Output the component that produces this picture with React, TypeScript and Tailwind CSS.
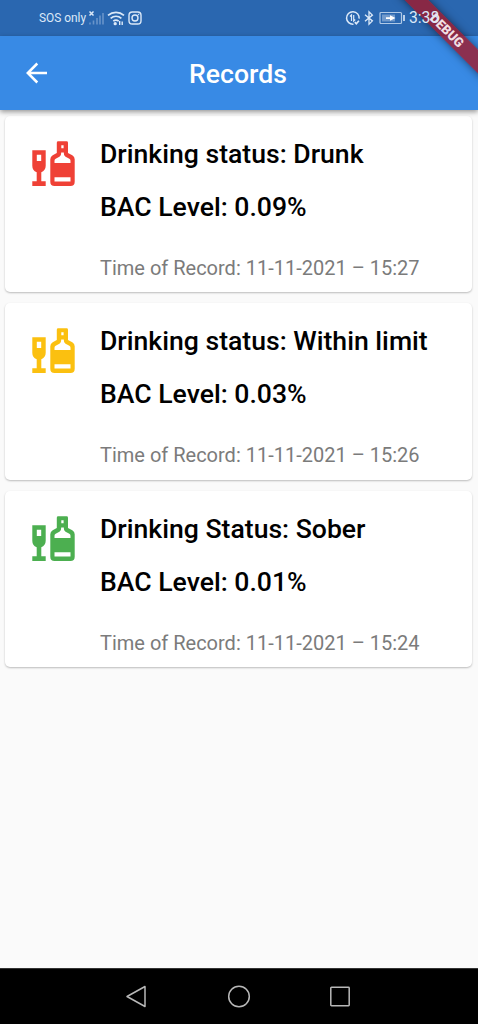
import React from "react";

type DrinkRecord = {
  status: string;
  level: string;
  time: string;
  color: string;
};

const records: DrinkRecord[] = [
  { status: "Drinking status: Drunk", level: "0.09%", time: "11-11-2021 – 15:27", color: "text-[#ef4136]" },
  { status: "Drinking status: Within limit", level: "0.03%", time: "11-11-2021 – 15:26", color: "text-[#fbc010]" },
  { status: "Drinking Status: Sober", level: "0.01%", time: "11-11-2021 – 15:24", color: "text-[#4caf50]" },
];

function LiquorIcon({ className }: { className: string }) {
  return (
    <svg viewBox="0 0 45 47" className={className} fill="currentColor" fillRule="evenodd">
      <path d="M1.300 10.300h13.400v15.500c0 3.200-1.700 5.400-4.400 6.400v9h4.400v4.800H1.300v-4.800H5.700v-9c-3-1-4.400-3.200-4.400-6.400zM5.800 14.700v6.300h4.400v-6.300z" />
      <path d="M27.200 1.300h8.400q1.400 0 1.400 1.400v10.200l4.300 2.400q2.400 1.300 2.400 4v22.400q0 4.300-4.300 4.300H23.600q-4.300 0-4.300-4.300V19.300q0-2.700 2.400-4l4.100-2.400V2.700q0-1.400 1.400-1.400zM30.300 5.300v2.900h2.300V5.300zM30.200 12.400c0 2.900-1 4.100-3.200 5.200l-2.300 1.200q-1.200.6-1.200 2v2.300h16v-2.300q0-1.400-1.200-2L36 17.600c-2.200-1.100-3.200-2.300-3.200-5.200zM23.500 37.300v4.200h16v-4.200z" />
    </svg>
  );
}

function StatusBar() {
  return (
    <div className="flex h-9 items-center justify-between bg-[#2a67b0] pl-[39px] text-[#dce9f8]">
      <div className="flex items-center">
        <span className="w-[48px] whitespace-nowrap text-[11.900px] leading-4">SOS only</span>
        <svg viewBox="0 0 17 16" className="h-4 w-[17px]" fill="none">
          <path d="M2.500 1.500l4 4m0-4l-4 4" stroke="currentColor" strokeWidth="1.500" />
          <path d="M3 14.500v-2M6.500 14.500v-4M10 14.500V8M13 14.500V5.500M16 14.500V3" stroke="currentColor" strokeWidth="1.600" opacity=".35" />
        </svg>
        <svg viewBox="0 0 18 16" className="ml-[3px] h-4 w-[18px]" fill="none" stroke="currentColor" strokeWidth="1.700">
          <path d="M1 5.300c4.700-4 11.300-4 16 0M3.600 8.300c3.200-2.700 7.600-2.700 10.800 0M6.300 11.200c1.600-1.400 3.800-1.400 5.400 0" />
          <circle cx="8.200" cy="13.700" r=".8" fill="currentColor" />
          <path d="M12.700 11v4M15.200 11.500v3.500" strokeWidth="1.400" />
        </svg>
        <svg viewBox="0 0 14 14" className="ml-[3px] h-[14px] w-[14px]" fill="none" stroke="currentColor" strokeWidth="1.400">
          <rect x="1" y="1" width="12" height="12" rx="3.300" />
          <circle cx="7" cy="7" r="3" />
          <circle cx="10.500" cy="3.500" r=".5" fill="currentColor" strokeWidth=".5" />
        </svg>
      </div>
      <div className="relative z-30 flex w-[133px] items-center">
        <svg viewBox="0 0 16 16" className="h-4 w-4" fill="none" stroke="currentColor" strokeWidth="1.500">
          <path d="M8.500 14.200a6.300 6.300 0 1 1 5.600-5.500" />
          <path d="M6.500 11V5L5 6.500M8.700 5v6l1.500-1.500" strokeWidth="1.200" />
          <path d="M9.800 12.200l1.500 1.500 2.600-3" strokeWidth="1.700" />
        </svg>
        <svg viewBox="0 0 10 16" className="ml-[3px] h-4 w-[10px]" fill="none" stroke="currentColor" strokeWidth="1.300">
          <path d="M1 4.700l7.400 6.200L5 14.300V1.700l3.400 3.400L1 11.300" />
        </svg>
        <svg viewBox="0 0 27 14" className="ml-[5px] h-[14px] w-[27px]" fill="none">
          <rect x="1" y="1.500" width="21.500" height="11" rx="1" stroke="currentColor" strokeWidth="1.200" opacity=".75" />
          <rect x="3" y="3.500" width="13" height="7" fill="currentColor" opacity=".4" />
          <path d="M7 6.300h4V4.200l5.500 2.900-5.500 2.700V8H7z" fill="white" />
          <path d="M25 4v6" stroke="currentColor" strokeWidth="1.600" />
        </svg>
        <span className="ml-[3px] text-[15.700px] leading-4">3:38</span>
      </div>
    </div>
  );
}

function RecordCard({ record }: { record: DrinkRecord }) {
  return (
    <article className="flex h-[176.500px] shrink-0 rounded-[5px] bg-white pl-[26px] pt-[24px] shadow-[0_1px_2px_rgba(0,0,0,0.25)]">
      <LiquorIcon className={"h-[47px] w-[45px] shrink-0 " + record.color} />
      <div className="-mt-px ml-[24px] whitespace-nowrap">
        <h2 className="text-[26.600px] font-medium leading-[30px] text-black">{record.status}</h2>
        <p className="mt-[23px] text-[26.600px] font-medium leading-[30px] text-black">BAC Level: {record.level}</p>
        <p className="mt-[34px] text-[20px] leading-6 text-[#7b7b7b]">Time of Record: {record.time}</p>
      </div>
    </article>
  );
}

export default function App() {
  return (
    <div className="relative flex h-[1024px] w-[478px] flex-col overflow-hidden bg-[#fafafa] font-['Roboto',sans-serif]">
      <StatusBar />
      <header className="relative z-10 flex h-[74px] shrink-0 items-center bg-[#388ae5] px-[25px] text-white shadow-[0_2px_5px_rgba(0,0,0,0.4)]">
        <button aria-label="Back" className="w-6">
          <svg viewBox="0 0 24 24" className="h-6 w-6" fill="none" stroke="currentColor" strokeWidth="2.500">
            <path d="M22 12H3M12.300 2.500L2.800 12l9.500 9.500" />
          </svg>
        </button>
        <h1 className="flex-1 pr-[26px] pt-[2px] text-center text-[26.600px] font-medium leading-8">Records</h1>
      </header>
      <main className="flex flex-1 flex-col gap-[11px] pl-[5px] pr-[6px] pt-[5.500px]">
        {records.map((record) => (
          <RecordCard key={record.time} record={record} />
        ))}
      </main>
      <nav className="flex h-[56px] shrink-0 items-center justify-between border-t border-[#333] bg-black pl-[125px] pr-[126px] text-[#b8b8b8]">
        <svg viewBox="0 0 24 24" className="h-6 w-6" fill="none" stroke="currentColor" strokeWidth="1.500" strokeLinejoin="round">
          <path d="M20 1.500v20L2 11.500z" />
        </svg>
        <svg viewBox="0 0 24 24" className="h-6 w-6" fill="none" stroke="currentColor" strokeWidth="1.500">
          <circle cx="12" cy="11.500" r="10.300" />
        </svg>
        <svg viewBox="0 0 24 24" className="h-6 w-6" fill="none" stroke="currentColor" strokeWidth="1.500">
          <rect x="2.800" y="2.300" width="18.400" height="18.400" rx=".7" />
        </svg>
      </nav>
      <div className="absolute left-[387px] top-[22px] z-20 flex h-[17px] w-[120px] rotate-45 items-center justify-center bg-[#a0192a]/80 text-[13px] font-black leading-none text-[#f1dfe4] shadow-[0_0_8px_rgba(0,0,0,0.5)]">
        DEBUG
      </div>
    </div>
  );
}
